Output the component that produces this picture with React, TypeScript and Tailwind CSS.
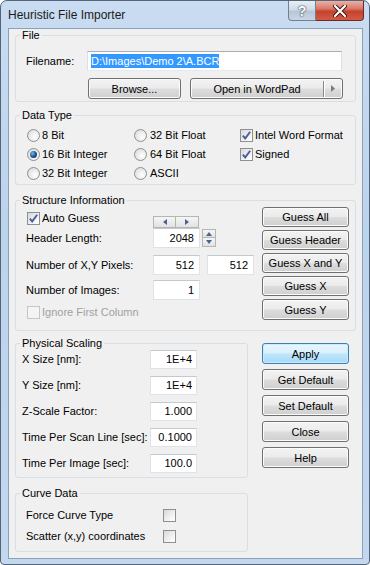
import React from "react";

// Win7 style push button
const btnBg =
  "bg-[linear-gradient(#f3f3f3_0%,#ebebeb_48%,#dddddd_52%,#cfcfcf_100%)]";

function Btn({
  children,
  className = "",
}: {
  children: React.ReactNode;
  className?: string;
}) {
  return (
    <div
      className={`flex items-center justify-center rounded-[3px] border border-[#707070] ${btnBg} shadow-[inset_0_0_0_1px_#fbfbfb] text-[11px] leading-[12px] text-black ${className}`}
    >
      {children}
    </div>
  );
}

function Field({ value, className = "" }: { value: string; className?: string }) {
  return (
    <div
      className={`flex h-[20px] w-[47px] shrink-0 items-center justify-end border border-[#dfe3e8] border-t-[#c4c9d0] bg-white pr-[5px] text-[11px] text-black ${className}`}
    >
      {value}
    </div>
  );
}

function Check({ checked = false, disabled = false }: { checked?: boolean; disabled?: boolean }) {
  return (
    <div
      className={`flex h-[13px] w-[13px] shrink-0 items-center justify-center border ${
        disabled
          ? "border-[#c6c6c6] bg-[#f4f4f4]"
          : "border-[#8e8f8f] bg-[linear-gradient(135deg,#d6d8da,#f6f6f6_70%,#ffffff)]"
      }`}
    >
      {checked && (
        <svg width="11" height="11" viewBox="0 0 11 11">
          <path d="M1.8 5.6 L4.2 8.4 L9.2 1.8" fill="none" stroke="#4a5f97" strokeWidth="1.9" />
        </svg>
      )}
    </div>
  );
}

function Radio({ checked = false }: { checked?: boolean }) {
  return (
    <div className="flex h-[13px] w-[13px] shrink-0 items-center justify-center rounded-full border border-[#8e8f8f] bg-[radial-gradient(circle_at_65%_65%,#ffffff,#d4d6d8)]">
      {checked && (
        <div className="h-[7px] w-[7px] rounded-full bg-[radial-gradient(circle_at_35%_35%,#7fb6e8,#1b4f8c_55%,#0a2550)]" />
      )}
    </div>
  );
}

function Group({
  title,
  className = "",
  children,
}: {
  title: string;
  className?: string;
  children: React.ReactNode;
}) {
  return (
    <fieldset className={`rounded-[3px] border border-[#d5dfe5] ${className}`}>
      <legend className="ml-[4px] px-[2px] text-[11px] leading-[12px] text-black">{title}</legend>
      {children}
    </fieldset>
  );
}

function Tri({ dir }: { dir: "l" | "r" | "u" | "d" }) {
  const d = {
    l: "M4 0 L0 3 L4 6 Z",
    r: "M0 0 L4 3 L0 6 Z",
    u: "M0 4 L3 0 L6 4 Z",
    d: "M0 0 L6 0 L3 4 Z",
  }[dir];
  const w = dir === "l" || dir === "r" ? 4 : 6;
  const h = dir === "l" || dir === "r" ? 6 : 4;
  return (
    <svg width={w} height={h} viewBox={`0 0 ${w} ${h}`}>
      <path d={d} fill="#4c6389" />
    </svg>
  );
}

const mini =
  "flex items-center justify-center border border-[#b5b5b5] bg-[linear-gradient(#f6f6f6,#e2e2e2)]";

export default function App() {
  return (
    <div className="h-[565px] w-[370px] bg-white font-['Liberation_Sans',Arial,sans-serif]">
      <div className="flex h-[565px] w-[370px] flex-col rounded-t-[7px] rounded-b-[4px] border border-[#53657b] bg-[linear-gradient(#c9dcf1,#bcd3ec_40%,#c3d8ef)]">
        {/* title bar */}
        <div className="flex h-[27px] items-start">
          <div className="flex-1 pl-[7px] pt-[7px] text-[12px] leading-[15px] text-[#1b1b1b]">
            Heuristic File Importer
          </div>
          <div className="mr-[5px] flex">
            <div className="flex h-[20px] w-[28px] items-center justify-center rounded-bl-[4px] border border-t-0 border-[#6f8095] bg-[linear-gradient(#e8eef5,#d0dbe7_45%,#b7c6d7_55%,#c9d6e4)] text-[14px] font-bold leading-[14px] text-white [text-shadow:0_0_2px_#2d3a4c,0_0_1px_#2d3a4c]">
              ?
            </div>
            <div className="flex h-[20px] w-[48px] items-center justify-center rounded-br-[4px] border border-l-0 border-t-0 border-[#6a2a22] bg-[linear-gradient(#eab1a5,#d9796a_40%,#c5432f_55%,#d45a43)]">
              <svg width="14" height="12" viewBox="0 0 14 12">
                <path d="M2 1 L12 11 M12 1 L2 11" stroke="#3b1510" strokeWidth="4" strokeLinecap="round" />
                <path d="M2 1 L12 11 M12 1 L2 11" stroke="#ffffff" strokeWidth="2.2" strokeLinecap="round" />
              </svg>
            </div>
          </div>
        </div>

        {/* client area */}
        <div className="mb-[5px] ml-[7px] mr-[6px] flex flex-1 flex-col border border-[#8aa1bb] bg-[#f0f0f0] px-[6px] text-[11px] text-black">
          {/* File */}
          <Group title="File" className="h-[73px]">
            <div className="pl-[10px] pt-[10px]">
              <div className="flex h-[20px] items-center">
                <div className="w-[61px]">Filename:</div>
                <div className="flex h-[20px] w-[255px] items-center border border-[#abadb3] border-l-[#dbdfe6] border-r-[#dbdfe6] border-b-[#e3e9ef] bg-white pl-[3px]">
                  <span className="bg-[#3399ff] leading-[14px] text-white">D:\Images\Demo 2\A.BCR</span>
                </div>
              </div>
              <div className="mt-[7px] flex gap-[9px] pl-[62px]">
                <Btn className="h-[21px] w-[93px]">Browse...</Btn>
                <Btn className="h-[21px] w-[153px] !justify-start">
                  <div className="flex-1 text-center">Open in WordPad</div>
                  <div className="h-[16px] w-px bg-[#8a8a8a] shadow-[1px_0_0_#ffffff]" />
                  <div className="flex w-[18px] items-center justify-center">
                    <svg width="4" height="7" viewBox="0 0 4 7">
                      <path d="M0 0 L4 3.5 L0 7 Z" fill="#7b7b7b" />
                    </svg>
                  </div>
                </Btn>
              </div>
            </div>
          </Group>

          {/* Data Type */}
          <Group title="Data Type" className="mt-[7px] h-[76px]">
            <div className="grid auto-rows-[19px] grid-cols-[107px_106px_1fr] pl-[11px] pt-[5px]">
              <div className="flex items-center gap-[2px]"><Radio /><span>8 Bit</span></div>
              <div className="flex items-center gap-[3px]"><Radio /><span>32 Bit Float</span></div>
              <div className="flex items-center gap-[2px]"><Check checked /><span>Intel Word Format</span></div>
              <div className="flex items-center gap-[2px]"><Radio checked /><span>16 Bit Integer</span></div>
              <div className="flex items-center gap-[3px]"><Radio /><span>64 Bit Float</span></div>
              <div className="flex items-center gap-[2px]"><Check checked /><span>Signed</span></div>
              <div className="flex items-center gap-[2px]"><Radio /><span>32 Bit Integer</span></div>
              <div className="flex items-center gap-[3px]"><Radio /><span>ASCII</span></div>
            </div>
          </Group>

          {/* Structure Information */}
          <Group title="Structure Information" className="mt-[9px] h-[137px]">
            <div className="flex">
              <div className="flex flex-col pl-[10px]">
                <div className="mt-[5px] flex h-[17px] items-start">
                  <div className="flex h-[14px] w-[127px] items-center gap-[2px] pl-[1px]">
                    <Check checked />
                    <span>Auto Guess</span>
                  </div>
                  <div className="mt-[5px] flex">
                    <div className={`${mini} h-[12px] w-[23px]`}><Tri dir="l" /></div>
                    <div className={`${mini} h-[12px] w-[23px] border-l-0`}><Tri dir="r" /></div>
                  </div>
                </div>
                <div className="flex h-[20px] items-center">
                  <div className="w-[127px]">Header Length:</div>
                  <Field value="2048" />
                  <div className="ml-[2px] flex h-[18px] w-[14px] flex-col">
                    <div className={`${mini} h-[9px]`}><Tri dir="u" /></div>
                    <div className={`${mini} h-[9px] border-t-0`}><Tri dir="d" /></div>
                  </div>
                </div>
                <div className="mt-[7px] flex h-[20px] items-center">
                  <div className="w-[127px]">Number of X,Y Pixels:</div>
                  <Field value="512" />
                  <Field value="512" className="ml-[7px]" />
                </div>
                <div className="mt-[5px] flex h-[20px] items-center">
                  <div className="w-[127px]">Number of Images:</div>
                  <Field value="1" />
                </div>
                <div className="mt-[6px] flex h-[13px] items-center gap-[2px] pl-[1px] text-[#a0a0a0]">
                  <Check disabled />
                  <span>Ignore First Column</span>
                </div>
              </div>
              <div className="ml-auto mt-[1px] flex flex-col gap-[3px] pr-[6px]">
                <Btn className="h-[20px] w-[87px]">Guess All</Btn>
                <Btn className="h-[20px] w-[87px]">Guess Header</Btn>
                <Btn className="h-[20px] w-[87px]">Guess X and Y</Btn>
                <Btn className="h-[20px] w-[87px]">Guess X</Btn>
                <Btn className="h-[21px] w-[87px]">Guess Y</Btn>
              </div>
            </div>
          </Group>

          {/* bottom: scaling + curve data, action buttons */}
          <div className="mt-[6px] flex">
            <div className="flex w-[233px] flex-col">
              <Group title="Physical Scaling" className="h-[141px]">
                <div className="flex flex-col gap-[7px] pl-[6px] pt-[1px]">
                  {[
                    ["X Size [nm]:", "1E+4"],
                    ["Y Size [nm]:", "1E+4"],
                    ["Z-Scale Factor:", "1.000"],
                    ["Time Per Scan Line [sec]:", "0.1000"],
                    ["Time Per Image [sec]:", "100.0"],
                  ].map(([label, v]) => (
                    <div key={label} className="flex h-[19px] items-center">
                      <div className="w-[128px]">{label}</div>
                      <Field value={v} className="!h-[19px] !pr-[4px]" />
                    </div>
                  ))}
                </div>
              </Group>
              <Group title="Curve Data" className="mt-[9px] h-[65px]">
                <div className="flex flex-col gap-[8px] pl-[10px] pt-[10px]">
                  <div className="flex h-[13px] items-center">
                    <div className="w-[137px]">Force Curve Type</div>
                    <Check />
                  </div>
                  <div className="flex h-[13px] items-center">
                    <div className="w-[137px]">Scatter (x,y) coordinates</div>
                    <Check />
                  </div>
                </div>
              </Group>
            </div>
            <div className="ml-[14px] mt-[6px] flex flex-col gap-[5px]">
              <Btn className="h-[21px] w-[87px] !border-[#3c7fb1] !bg-[linear-gradient(#eaf6fd_0%,#d9f0fc_48%,#bee6fd_52%,#a7d9f5_100%)] !shadow-[inset_0_0_0_1px_#c9ecfd]">
                Apply
              </Btn>
              <Btn className="h-[21px] w-[87px]">Get Default</Btn>
              <Btn className="h-[21px] w-[87px]">Set Default</Btn>
              <Btn className="h-[21px] w-[87px]">Close</Btn>
              <Btn className="h-[21px] w-[87px]">Help</Btn>
            </div>
          </div>
        </div>
      </div>
    </div>
  );
}
